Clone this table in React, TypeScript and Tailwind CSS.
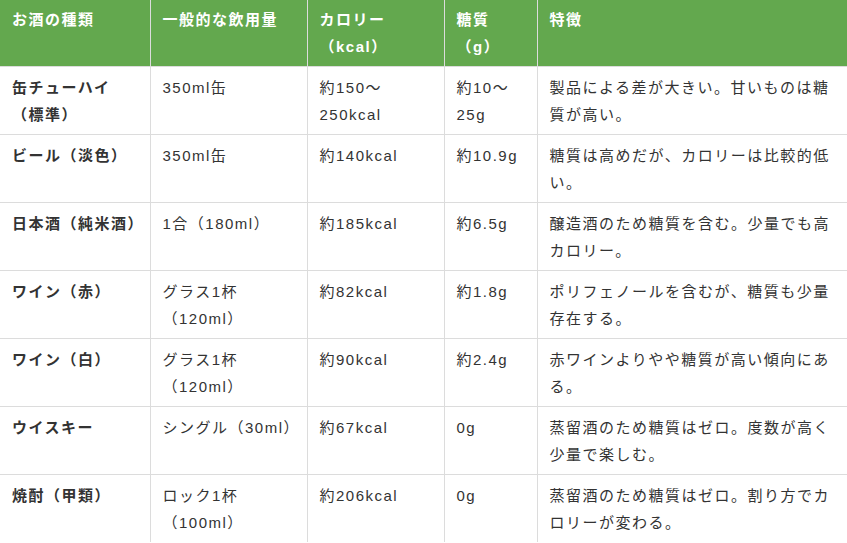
import React from "react";

type Row = {
  name: string[];
  amount: string[];
  kcal: string[];
  sugar: string[];
  note: string[];
};

const rows: Row[] = [
  {
    name: ["缶チューハイ", "（標準）"],
    amount: ["350ml缶"],
    kcal: ["約150～", "250kcal"],
    sugar: ["約10～", "25g"],
    note: ["製品による差が大きい。甘いものは糖", "質が高い。"],
  },
  {
    name: ["ビール（淡色）"],
    amount: ["350ml缶"],
    kcal: ["約140kcal"],
    sugar: ["約10.9g"],
    note: ["糖質は高めだが、カロリーは比較的低", "い。"],
  },
  {
    name: ["日本酒（純米酒）"],
    amount: ["1合（180ml）"],
    kcal: ["約185kcal"],
    sugar: ["約6.5g"],
    note: ["醸造酒のため糖質を含む。少量でも高", "カロリー。"],
  },
  {
    name: ["ワイン（赤）"],
    amount: ["グラス1杯", "（120ml）"],
    kcal: ["約82kcal"],
    sugar: ["約1.8g"],
    note: ["ポリフェノールを含むが、糖質も少量", "存在する。"],
  },
  {
    name: ["ワイン（白）"],
    amount: ["グラス1杯", "（120ml）"],
    kcal: ["約90kcal"],
    sugar: ["約2.4g"],
    note: ["赤ワインよりやや糖質が高い傾向にあ", "る。"],
  },
  {
    name: ["ウイスキー"],
    amount: ["シングル（30ml）"],
    kcal: ["約67kcal"],
    sugar: ["0g"],
    note: ["蒸留酒のため糖質はゼロ。度数が高く", "少量で楽しむ。"],
  },
  {
    name: ["焼酎（甲類）"],
    amount: ["ロック1杯", "（100ml）"],
    kcal: ["約206kcal"],
    sugar: ["0g"],
    note: ["蒸留酒のため糖質はゼロ。割り方でカ", "ロリーが変わる。"],
  },
];

const headers: string[][] = [
  ["お酒の種類"],
  ["一般的な飲用量"],
  ["カロリー", "（kcal）"],
  ["糖質", "（g）"],
  ["特徴"],
];

const Lines = ({ lines }: { lines: string[] }) => (
  <>
    {lines.map((l, i) => (
      <React.Fragment key={i}>
        {i > 0 && <br />}
        {l}
      </React.Fragment>
    ))}
  </>
);

export default function App() {
  return (
    <div
      className="w-[847px] h-[543px] overflow-hidden bg-white"
      style={{ fontFamily: '"Liberation Sans", "Noto Sans CJK JP", sans-serif' }}
    >
      <table className="w-full table-fixed border-collapse text-[15px] leading-[27px] tracking-[0.1em] text-[#333]">
        <colgroup>
          <col className="w-[150px]" />
          <col className="w-[157px]" />
          <col className="w-[137px]" />
          <col className="w-[93px]" />
          <col />
        </colgroup>
        <thead>
          <tr className="bg-[#63a84e]">
            {headers.map((h, i) => (
              <th
                key={i}
                className="px-3 py-[6px] text-left align-top font-bold text-white whitespace-nowrap border-l border-[#dcdcdc] first:border-l-0"
              >
                <Lines lines={h} />
              </th>
            ))}
          </tr>
        </thead>
        <tbody>
          {rows.map((r, i) => (
            <tr key={i} className="border-t border-[#dcdcdc]">
              <td className="px-3 py-[6.5px] align-top font-bold whitespace-nowrap">
                <Lines lines={r.name} />
              </td>
              <td className="px-3 py-[6.5px] align-top whitespace-nowrap border-l border-[#dcdcdc]">
                <Lines lines={r.amount} />
              </td>
              <td className="px-3 py-[6.5px] align-top whitespace-nowrap border-l border-[#dcdcdc]">
                <Lines lines={r.kcal} />
              </td>
              <td className="px-3 py-[6.5px] align-top whitespace-nowrap border-l border-[#dcdcdc]">
                <Lines lines={r.sugar} />
              </td>
              <td className="px-3 py-[6.5px] align-top whitespace-nowrap border-l border-[#dcdcdc]">
                <Lines lines={r.note} />
              </td>
            </tr>
          ))}
        </tbody>
      </table>
    </div>
  );
}
